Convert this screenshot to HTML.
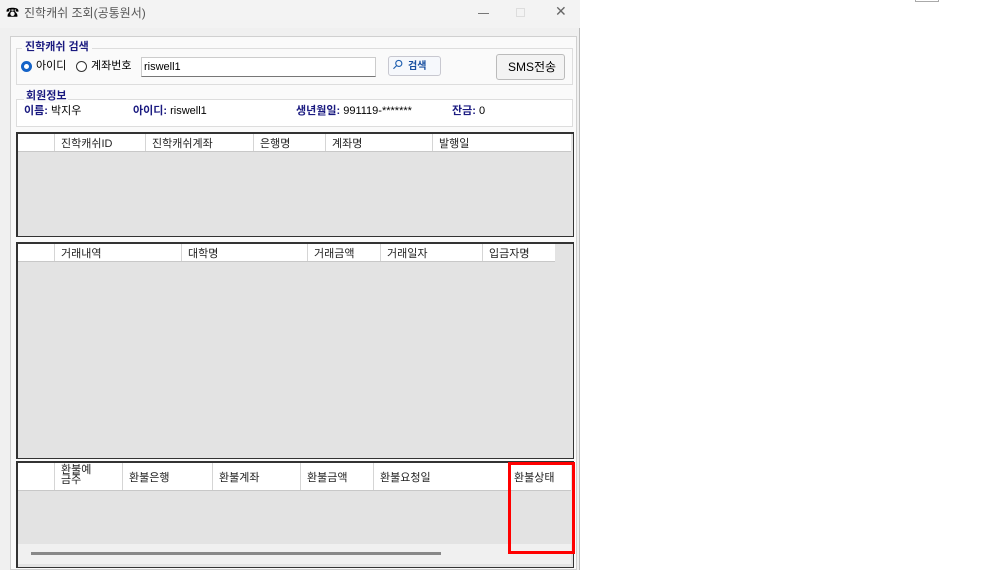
<!DOCTYPE html>
<html><head><meta charset="utf-8"><style>
*{margin:0;padding:0;box-sizing:border-box}
body{width:983px;height:570px;background:#fff;position:relative;overflow:hidden;font-family:"Liberation Sans","Noto Sans CJK KR",sans-serif;font-size:11px;color:#000}
.a{position:absolute}
.t{position:absolute;white-space:nowrap;line-height:13px}
.b{color:#1a1a80;font-weight:bold}
.grid{position:absolute;border:1px solid #333;background:#e3e3e3;border-top-width:2px;border-left-width:2px}
.hdr{position:absolute;left:0;top:0;background:#fff;border-bottom:1px solid #c8c8c8}
.col{position:absolute;top:0;bottom:0;border-left:1px solid #d5d5d5}
.col span{position:absolute;left:6px;white-space:nowrap;color:#222}
</style></head><body>
<div class="a" style="left:0;top:0;width:580px;height:570px;background:#f0f0f0;border-right:1px solid #bbb"></div>
<div class="a" style="left:0;top:0;width:580px;height:28px;background:#f3f3f3"></div>
<div class="t" style="left:6px;top:6px;font-size:13px">☎</div>
<div class="t" style="left:24px;top:7px;font-size:12px;color:#555">진학캐쉬 조회(공통원서)</div>
<div class="a" style="left:478px;top:13px;width:11px;height:1px;background:#777"></div>
<div class="a" style="left:516px;top:8px;width:9px;height:9px;border:1px solid #ddd"></div>
<div class="t" style="left:555px;top:5px;font-size:14px;color:#666">✕</div>
<div class="a" style="left:915px;top:0;width:24px;height:2px;border:1px solid #aaa;border-top:none"></div>

<div class="a" style="left:10px;top:36px;width:567px;height:534px;background:#fafafa;border:1px solid #d0d0d0"></div>
<div class="a" style="left:16px;top:48px;width:557px;height:37px;border:1px solid #ddd"></div>
<div class="t b" style="left:22px;top:41px;background:#fafafa;padding:0 3px">진학캐쉬 검색</div>
<div class="a" style="left:21px;top:61px;width:11px;height:11px;border-radius:50%;background:#fff;border:3px solid #1463c8"></div>
<div class="t" style="left:36px;top:60px">아이디</div>
<div class="a" style="left:76px;top:61px;width:11px;height:11px;border-radius:50%;background:#fff;border:1px solid #333"></div>
<div class="t" style="left:91px;top:60px">계좌번호</div>
<div class="a" style="left:141px;top:57px;width:235px;height:20px;background:#fff;border:1px solid #ccc;border-bottom:1px solid #777"></div>
<div class="t" style="left:144px;top:61px">riswell1</div>
<div class="a" style="left:388px;top:56px;width:53px;height:20px;background:#f6f8fc;border:1px solid #c8c8d0;border-radius:3px"></div>
<div class="t" style="left:393px;top:58px;font-size:13px;color:#2060b0;transform:rotate(45deg)">⚲</div>
<div class="t b" style="left:408px;top:60px;font-size:10px;color:#1a50a0">검색</div>
<div class="a" style="left:496px;top:54px;width:69px;height:26px;background:#f3f3f3;border:1px solid #bbb;border-radius:3px"></div>
<div class="t" style="left:508px;top:61px;font-size:12px">SMS전송</div>

<div class="a" style="left:16px;top:99px;width:557px;height:28px;border:1px solid #ddd;background:#fff"></div>
<div class="t b" style="left:24px;top:90px;background:#fafafa;padding:0 2px">회원정보</div>
<div class="t" style="left:24px;top:105px"><span class="b">이름:</span> 박지우</div>
<div class="t" style="left:133px;top:105px"><span class="b">아이디:</span> riswell1</div>
<div class="t" style="left:296px;top:105px"><span class="b">생년월일:</span> 991119-*******</div>
<div class="t" style="left:452px;top:105px"><span class="b">잔금:</span> 0</div>

<div class="grid" style="left:16px;top:132px;width:558px;height:105px">
 <div class="hdr" style="width:553px;height:18px">
  <div class="col" style="left:36px"><span style="top:1px">진학캐쉬ID</span></div>
  <div class="col" style="left:127px"><span style="top:1px">진학캐쉬계좌</span></div>
  <div class="col" style="left:235px"><span style="top:1px">은행명</span></div>
  <div class="col" style="left:307px"><span style="top:1px">계좌명</span></div>
  <div class="col" style="left:414px"><span style="top:1px">발행일</span></div>
 </div>
</div>

<div class="grid" style="left:16px;top:242px;width:558px;height:217px">
 <div class="hdr" style="width:537px;height:18px">
  <div class="col" style="left:36px"><span style="top:1px">거래내역</span></div>
  <div class="col" style="left:163px"><span style="top:1px">대학명</span></div>
  <div class="col" style="left:289px"><span style="top:1px">거래금액</span></div>
  <div class="col" style="left:362px"><span style="top:1px">거래일자</span></div>
  <div class="col" style="left:464px"><span style="top:1px">입금자명</span></div>
 </div>
</div>

<div class="grid" style="left:16px;top:461px;width:558px;height:107px">
 <div class="hdr" style="width:553px;height:28px">
  <div class="col" style="left:36px"><span style="top:2px;line-height:10px">환불예<br>금주</span></div>
  <div class="col" style="left:104px"><span style="top:6px">환불은행</span></div>
  <div class="col" style="left:194px"><span style="top:6px">환불계좌</span></div>
  <div class="col" style="left:282px"><span style="top:6px">환불금액</span></div>
  <div class="col" style="left:355px"><span style="top:6px">환불요청일</span></div>
  <div class="col" style="left:490px;border-left:none"><span style="top:6px">환불상태</span></div>
 </div>
 <div class="a" style="left:0;top:81px;width:553px;height:20px;background:#f0f0f0"></div>
 <div class="a" style="left:13px;top:89px;width:410px;height:3px;background:#888"></div>
</div>
<div class="a" style="left:508px;top:462px;width:67px;height:92px;border:3px solid #f00"></div>
</body></html>
